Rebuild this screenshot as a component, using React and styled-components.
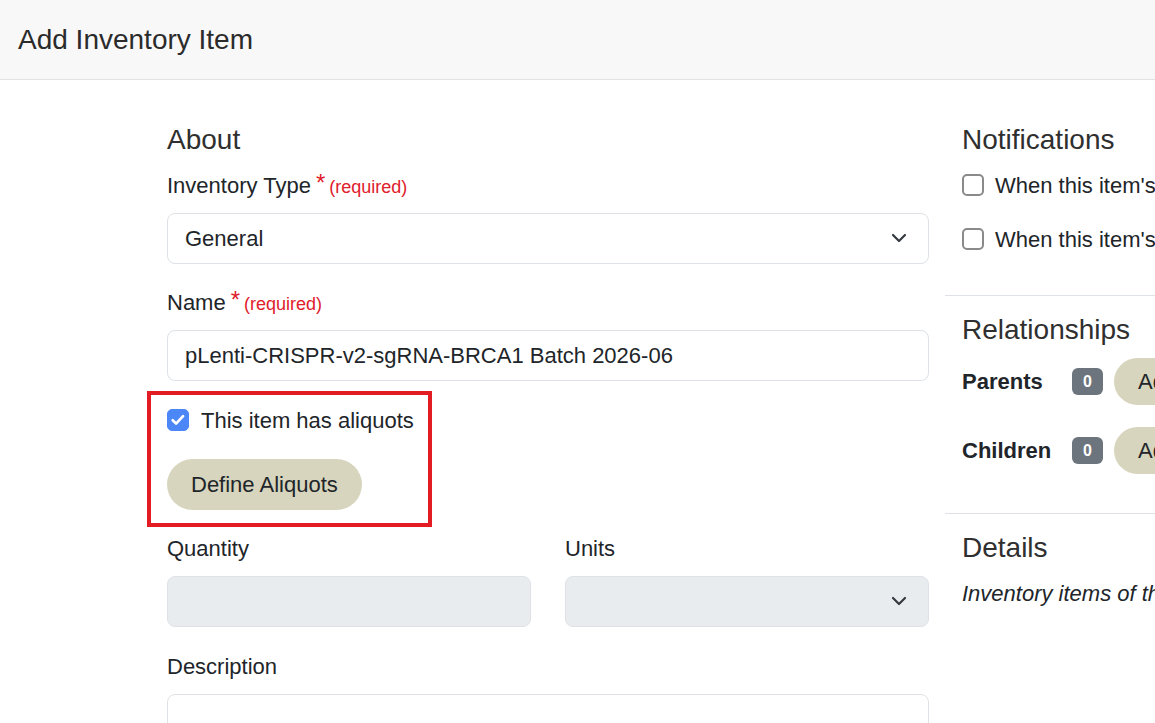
import React from 'react';
import styled, { createGlobalStyle } from 'styled-components';

const Global = createGlobalStyle`
	html, body {
		margin: 0;
		padding: 0;
		background: #fff;
		overflow: hidden;
	}
	body {
		font-family: "Liberation Sans", Arial, sans-serif;
		color: #212529;
		font-size: 22px;
		line-height: 1.5;
	}
	*, *::before, *::after { box-sizing: border-box; }
`;

const Header = styled.header`
	height: 80px;
	background: #f8f8f8;
	border-bottom: 1px solid #e2e2e2;
	display: flex;
	align-items: center;
	padding: 0 18px;

	h1 {
		margin: 0;
		font-size: 28px;
		font-weight: 400;
		line-height: 1.2;
		color: #2b2b2b;
	}
`;

const Main = styled.main`
	display: flex;
	align-items: flex-start;
	padding-left: 167px;
	padding-top: 26px;
`;

const LeftCol = styled.div`
	flex: 0 0 762px;
	padding-top: 17px;
`;

const RightCol = styled.aside`
	flex: 0 0 460px;
	margin-left: 16px;
`;

const Section = styled.section`
	padding: 17px 0 17px 17px;
	border-top: ${p => (p.$first ? 'none' : '1px solid #dee2e6')};
`;

const Heading = styled.h2`
	margin: 0 0 12px;
	font-size: 28px;
	font-weight: 400;
	line-height: 1.2;
	color: #2f2f2f;
`;

const Group = styled.div`
	margin-bottom: ${p => p.$mb ?? 22}px;
`;

const Row = styled.div`
	display: grid;
	grid-template-columns: 1fr 1fr;
	column-gap: 34px;
`;

const Label = styled.label`
	display: block;
	height: 33px;
	margin-bottom: 11px;
	line-height: 33px;
`;

const Star = styled.span`
	color: #e0202a;
	margin-left: 5px;
	font-size: 24px;
	line-height: 1;
	position: relative;
	top: -2px;
`;

const Required = styled.span`
	color: #e0202a;
	font-size: 18px;
	margin-left: 4px;
`;

const Field = styled.div`
	position: relative;
	height: 51px;
	border: 1px solid #dee2e6;
	border-radius: 8px;
	background: ${p => (p.$disabled ? '#e9ecef' : '#fff')};
	padding: 0 17px;
	display: flex;
	align-items: center;
	line-height: 33px;
`;

const Area = styled(Field)`
	height: 130px;
	align-items: flex-start;
`;

const Chevron = styled.svg`
	position: absolute;
	right: 21px;
	top: 50%;
	margin-top: -7px;
	width: 16px;
	height: 14px;
`;

const Check = styled.label`
	display: flex;
	align-items: center;
	gap: ${p => p.$gap || 12}px;
	height: 33px;
	line-height: 33px;
	margin-bottom: ${p => p.$mb ?? 0}px;
`;

const Box = styled.span`
	flex: 0 0 22px;
	width: 22px;
	height: 22px;
	border-radius: 5px;
	display: inline-flex;
	align-items: center;
	justify-content: center;
	background: ${p => (p.$checked ? '#4b87f6' : '#fff')};
	border: ${p => (p.$checked ? '1px solid #4b87f6' : '2px solid #8a8a8a')};
`;

const Highlight = styled.div`
	position: relative;
	margin-top: 23px;
	&::after {
		content: '';
		position: absolute;
		top: -13px;
		bottom: -17px;
		left: -20px;
		width: 285px;
		border: 4px solid #e31b23;
		pointer-events: none;
	}
`;

const PillButton = styled.button`
	font-family: inherit;
	font-size: 22px;
	line-height: 33px;
	color: #212529;
	background: #d7d5bd;
	border: none;
	border-radius: 999px;
	height: ${p => p.$h || 51}px;
	padding: 0 24px;
	white-space: nowrap;
	cursor: pointer;
`;

const RelRow = styled.div`
	display: flex;
	align-items: center;
	margin-bottom: 22px;
`;

const RelLabel = styled.strong`
	flex: 0 0 110px;
	font-weight: 700;
`;

const Badge = styled.span`
	display: inline-flex;
	align-items: center;
	justify-content: center;
	width: 31px;
	height: 27px;
	border-radius: 6px;
	background: #6c757d;
	color: #fff;
	font-size: 16px;
	font-weight: 700;
	margin-right: 11px;
`;

const Note = styled.p`
	margin: 0 0 22px;
	font-style: italic;
	white-space: nowrap;
`;

const Tick = () => (
	<svg width="18" height="18" viewBox="0 0 16 16">
		<path d="M3.3 8.2l3 3 6.2-6.6" fill="none" stroke="#fff" strokeWidth="2.4" strokeLinecap="round" strokeLinejoin="round"/>
	</svg>
);

const Caret = () => (
	<Chevron viewBox="0 0 16 14">
		<path d="M2 4l6 6 6-6" fill="none" stroke="#343a40" strokeWidth="2.2" strokeLinecap="round" strokeLinejoin="round"/>
	</Chevron>
);

export default function App() {
	return (
		<>
			<Global/>
			<Header><h1>Add Inventory Item</h1></Header>
			<Main>
				<LeftCol>
					<Heading>About</Heading>
					<Group>
						<Label>Inventory Type<Star>*</Star><Required>(required)</Required></Label>
						<Field>General<Caret/></Field>
					</Group>
					<Group $mb={0}>
						<Label>Name<Star>*</Star><Required>(required)</Required></Label>
						<Field>pLenti-CRISPR-v2-sgRNA-BRCA1 Batch 2026-06</Field>
					</Group>
					<Highlight>
						<Check $mb={22}>
							<Box $checked><Tick/></Box>
							This item has aliquots
						</Check>
						<PillButton>Define Aliquots</PillButton>
					</Highlight>
					<Group $mb={22}/>
					<Row>
						<Group $mb={23}>
							<Label>Quantity</Label>
							<Field $disabled/>
						</Group>
						<Group $mb={23}>
							<Label>Units</Label>
							<Field $disabled><Caret/></Field>
						</Group>
					</Row>
					<Group>
						<Label>Description</Label>
						<Area/>
					</Group>
				</LeftCol>
				<RightCol>
					<Section $first>
						<Heading>Notifications</Heading>
						<Check $gap={11} $mb={21}>
							<Box/>
							<span>When this item's quantity falls below a threshold</span>
						</Check>
						<Check $gap={11} $mb={22}>
							<Box/>
							<span>When this item's expiration date approaches</span>
						</Check>
					</Section>
					<Section>
						<Heading>Relationships</Heading>
						<RelRow>
							<RelLabel>Parents</RelLabel>
							<Badge>0</Badge>
							<PillButton $h={47}>Add Parent</PillButton>
						</RelRow>
						<RelRow>
							<RelLabel>Children</RelLabel>
							<Badge>0</Badge>
							<PillButton $h={47}>Add Child</PillButton>
						</RelRow>
					</Section>
					<Section>
						<Heading>Details</Heading>
						<Note>Inventory items of this type have no additional fields.</Note>
					</Section>
				</RightCol>
			</Main>
		</>
	);
}
